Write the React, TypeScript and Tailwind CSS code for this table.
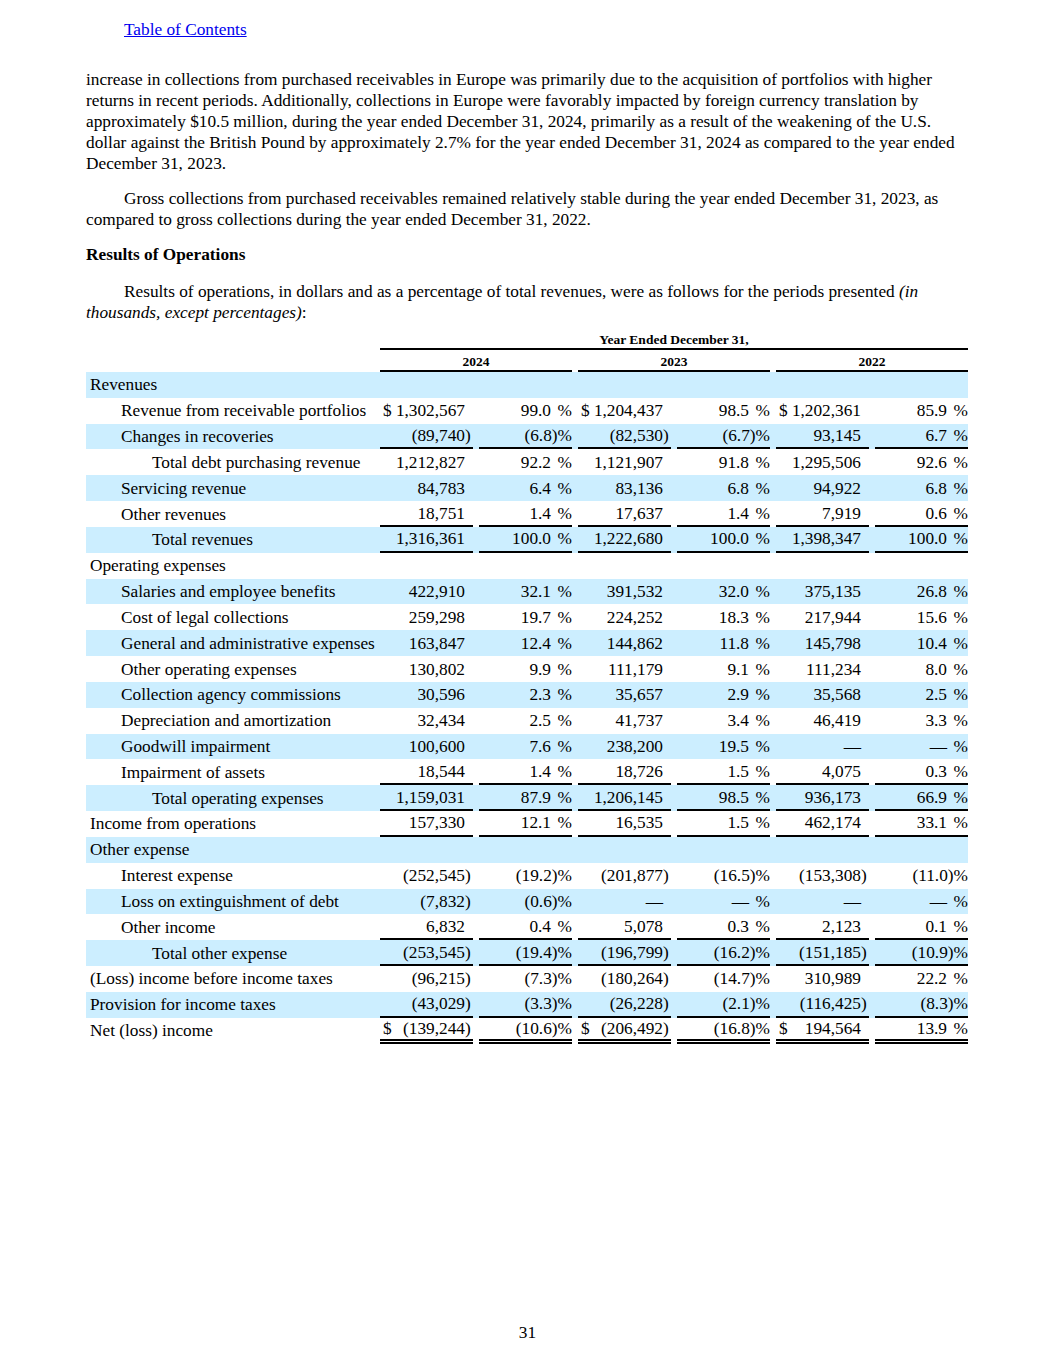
type Row = {
  label: string;
  level: 0 | 1 | 2;
  vals?: string[];
  dollar?: boolean;
  line?: "single" | "double";
};

const ROWS: Row[] = [
  { label: "Revenues", level: 0 },
  { label: "Revenue from receivable portfolios", level: 1, dollar: true, vals: ["1,302,567", "99.0", "1,204,437", "98.5", "1,202,361", "85.9"] },
  { label: "Changes in recoveries", level: 1, line: "single", vals: ["(89,740)", "(6.8)", "(82,530)", "(6.7)", "93,145", "6.7"] },
  { label: "Total debt purchasing revenue", level: 2, vals: ["1,212,827", "92.2", "1,121,907", "91.8", "1,295,506", "92.6"] },
  { label: "Servicing revenue", level: 1, vals: ["84,783", "6.4", "83,136", "6.8", "94,922", "6.8"] },
  { label: "Other revenues", level: 1, line: "single", vals: ["18,751", "1.4", "17,637", "1.4", "7,919", "0.6"] },
  { label: "Total revenues", level: 2, line: "single", vals: ["1,316,361", "100.0", "1,222,680", "100.0", "1,398,347", "100.0"] },
  { label: "Operating expenses", level: 0 },
  { label: "Salaries and employee benefits", level: 1, vals: ["422,910", "32.1", "391,532", "32.0", "375,135", "26.8"] },
  { label: "Cost of legal collections", level: 1, vals: ["259,298", "19.7", "224,252", "18.3", "217,944", "15.6"] },
  { label: "General and administrative expenses", level: 1, vals: ["163,847", "12.4", "144,862", "11.8", "145,798", "10.4"] },
  { label: "Other operating expenses", level: 1, vals: ["130,802", "9.9", "111,179", "9.1", "111,234", "8.0"] },
  { label: "Collection agency commissions", level: 1, vals: ["30,596", "2.3", "35,657", "2.9", "35,568", "2.5"] },
  { label: "Depreciation and amortization", level: 1, vals: ["32,434", "2.5", "41,737", "3.4", "46,419", "3.3"] },
  { label: "Goodwill impairment", level: 1, vals: ["100,600", "7.6", "238,200", "19.5", "—", "—"] },
  { label: "Impairment of assets", level: 1, line: "single", vals: ["18,544", "1.4", "18,726", "1.5", "4,075", "0.3"] },
  { label: "Total operating expenses", level: 2, line: "single", vals: ["1,159,031", "87.9", "1,206,145", "98.5", "936,173", "66.9"] },
  { label: "Income from operations", level: 0, line: "single", vals: ["157,330", "12.1", "16,535", "1.5", "462,174", "33.1"] },
  { label: "Other expense", level: 0 },
  { label: "Interest expense", level: 1, vals: ["(252,545)", "(19.2)", "(201,877)", "(16.5)", "(153,308)", "(11.0)"] },
  { label: "Loss on extinguishment of debt", level: 1, vals: ["(7,832)", "(0.6)", "—", "—", "—", "—"] },
  { label: "Other income", level: 1, line: "single", vals: ["6,832", "0.4", "5,078", "0.3", "2,123", "0.1"] },
  { label: "Total other expense", level: 2, line: "single", vals: ["(253,545)", "(19.4)", "(196,799)", "(16.2)", "(151,185)", "(10.9)"] },
  { label: "(Loss) income before income taxes", level: 0, vals: ["(96,215)", "(7.3)", "(180,264)", "(14.7)", "310,989", "22.2"] },
  { label: "Provision for income taxes", level: 0, line: "single", vals: ["(43,029)", "(3.3)", "(26,228)", "(2.1)", "(116,425)", "(8.3)"] },
  { label: "Net (loss) income", level: 0, line: "double", dollar: true, vals: ["(139,244)", "(10.6)", "(206,492)", "(16.8)", "194,564", "13.9"] },
];

const PAD = ["pl-[4px]", "pl-[35px]", "pl-[66px]"];

function lineClass(line?: "single" | "double") {
  if (line === "single") return "border-b-2 border-black";
  if (line === "double") return "border-b-[5px] border-double border-black";
  return "";
}

function Amount({ v, dollar, line }: { v: string; dollar?: boolean; line?: "single" | "double" }) {
  const neg = v.startsWith("(");
  return (
    <div className={`flex h-full items-center justify-between ${lineClass(line)}`}>
      <span className="pl-[3px]">{dollar ? "$" : ""}</span>
      <span className="flex">
        <span>{neg ? v.slice(0, -1) : v}</span>
        <span className="inline-block w-[8px] text-left">{neg ? ")" : ""}</span>
      </span>
    </div>
  );
}

function Pct({ v, line }: { v: string; line?: "single" | "double" }) {
  const neg = v.startsWith("(");
  return (
    <div className={`flex h-full items-center justify-end ${lineClass(line)}`}>
      <span>{v}</span>
      <span className={`inline-block text-right ${neg ? "" : "w-[21px]"}`}>%</span>
    </div>
  );
}

export default function App() {
  return (
    <div className="flex min-h-[1365px] flex-col bg-white text-[17.3px] leading-[21px] text-black font-['Liberation_Serif','Times_New_Roman',serif]">
      <div className="pl-[124px] pt-[19px]">
        <a href="#" className="text-[#0000ee] underline">Table of Contents</a>
      </div>

      <div className="ml-[86px] w-[882px]">
        <p className="mt-[29px] pr-[2px]">
          increase in collections from purchased receivables in Europe was primarily due to the acquisition of portfolios with higher returns in recent periods. Additionally, collections in Europe were favorably impacted by foreign currency translation by approximately $10.5 million, during the year ended December 31, 2024, primarily as a result of the weakening of the U.S. dollar against the British Pound by approximately 2.7% for the year ended December 31, 2024 as compared to the year ended December 31, 2023.
        </p>
        <p className="mt-[14px] indent-[38px]">
          Gross collections from purchased receivables remained relatively stable during the year ended December 31, 2023, as compared to gross collections during the year ended December 31, 2022.
        </p>
        <p className="mt-[14px] font-bold">Results of Operations</p>
        <p className="mt-[16px] indent-[38px]">
          Results of operations, in dollars and as a percentage of total revenues, were as follows for the periods presented <i>(in thousands, except percentages)</i>:
        </p>

        <div className="mt-[9px]">
          <div className="grid grid-cols-[288px_repeat(6,93px)] gap-x-[6px]">
            <div />
            <div className="col-span-6 h-[18px] border-b-2 border-black text-center text-[13.5px] font-bold leading-[16px]">
              Year Ended December 31,
            </div>
          </div>
          <div className="grid grid-cols-[288px_repeat(6,93px)] gap-x-[6px]">
            <div />
            {["2024", "2023", "2022"].map((y) => (
              <div key={y} className="col-span-2 h-[22px] border-b-2 border-black pt-[4px] text-center text-[13.5px] font-bold leading-[16px]">
                {y}
              </div>
            ))}
          </div>

          {ROWS.map((r, i) => (
            <div
              key={r.label}
              className={`grid h-[25.84px] grid-cols-[288px_repeat(6,93px)] gap-x-[6px] ${i % 2 === 0 ? "bg-[#cceeff]" : ""}`}
            >
              <div className={`flex items-center whitespace-nowrap ${PAD[r.level]}`}>{r.label}</div>
              {r.vals
                ? r.vals.map((v, j) =>
                    j % 2 === 0 ? (
                      <Amount key={j} v={v} dollar={r.dollar} line={r.line} />
                    ) : (
                      <Pct key={j} v={v} line={r.line} />
                    )
                  )
                : null}
            </div>
          ))}
        </div>
      </div>

      <div className="mt-auto pb-[22px] text-center">31</div>
    </div>
  );
}
